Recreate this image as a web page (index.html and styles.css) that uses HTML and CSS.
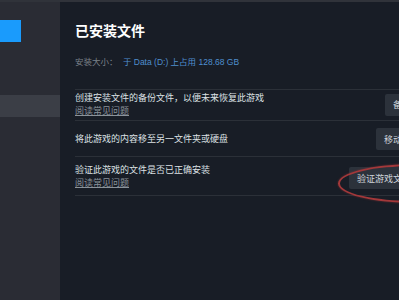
FILE: index.html
```html
<!DOCTYPE html>
<html>

<head>
    <meta charset="utf-8">
    <title>已安装文件</title>
    <link rel="stylesheet" href="styles.css">
</head>

<body>
    <div class="app">
        <div class="sidebar">
            <div class="sidebar-logo"></div>
            <div class="sidebar-item active"></div>
        </div>

        <div class="main">
            <div class="title">已安装文件</div>
            <div class="size-line">
                <span class="size-label">安装大小：</span>
                <span class="size-value">于 Data (D:) 上占用 128.68 GB</span>
            </div>

            <div class="option-list">
                <div class="option-row compact">
                    <div class="option-text">
                        <div class="option-desc">创建安装文件的备份文件，以便未来恢复此游戏</div>
                        <a class="option-link" href="#">阅读常见问题</a>
                    </div>
                    <button class="button">备份游戏文件</button>
                </div>
                <div class="option-row">
                    <div class="option-text">
                        <div class="option-desc">将此游戏的内容移至另一文件夹或硬盘</div>
                    </div>
                    <button class="button">移动安装文件夹</button>
                </div>
                <div class="option-row">
                    <div class="option-text">
                        <div class="option-desc">验证此游戏的文件是否已正确安装</div>
                        <a class="option-link" href="#">阅读常见问题</a>
                    </div>
                    <div class="button-wrap">
                        <button class="button">验证游戏文件的完整性</button>
                        <div class="highlight-ring"></div>
                    </div>
                </div>
            </div>
        </div>
    </div>
</body>

</html>
```

FILE: styles.css
```css
body {
    margin: 0;
    width: 399px;
    height: 300px;
    overflow: hidden;
    background: #181d26;
    font-family: 'Liberation Sans', 'Noto Sans CJK SC', sans-serif;
}

.app {
    display: flex;
    height: 298px;
    border-top: 2px solid #30333a;
}

.sidebar {
    flex: 0 0 60px;
    background: #2a2c34;
    padding-top: 18px;
}

.sidebar-logo {
    width: 21px;
    height: 22px;
    background: #1a9bfc;
}

.sidebar-item {
    height: 22px;
    margin-top: 53px;
}

.sidebar-item.active {
    background: #3b3e46;
}

.main {
    flex: 0 0 395px;
    padding: 20px 0 0 15px;
}

.title {
    font-size: 14px;
    line-height: 18px;
    font-weight: 700;
    color: #ffffff;
    margin-bottom: 16px;
}

.size-line {
    font-size: 8.5px;
    line-height: 12px;
    margin-bottom: 21px;
}

.size-label {
    color: #7a8189;
    margin-right: 3px;
}

.size-value {
    color: #4f8fcf;
}

.option-list {
    border-top: 1px solid #2b3038;
}

.option-row {
    display: flex;
    align-items: center;
    justify-content: space-between;
    padding: 7px 15px 6px 0;
    min-height: 22px;
    border-bottom: 1px solid #2b3038;
}

.option-row.compact {
    padding: 2px 15px 3px 0;
}

.option-desc {
    font-size: 9px;
    line-height: 12.5px;
    color: #dde1e5;
}

.option-link {
    display: block;
    font-size: 9px;
    line-height: 12.5px;
    color: #8a929a;
    text-decoration: underline;
}

.button {
    height: 22px;
    padding: 0 8px;
    background: #2c323b;
    color: #d0d6dc;
    border: none;
    border-radius: 2px;
    font-family: 'Liberation Sans', 'Noto Sans CJK SC', sans-serif;
    font-size: 9px;
    white-space: nowrap;
}

.button-wrap {
    position: relative;
    margin-top: 3px;
}

.highlight-ring {
    position: absolute;
    left: -11px;
    top: -3px;
    width: 150px;
    height: 35px;
    border: 2px solid #a3383a;
    border-radius: 50%;
    box-shadow: 0 0 2px rgba(163, 56, 58, 0.6);
}
```
